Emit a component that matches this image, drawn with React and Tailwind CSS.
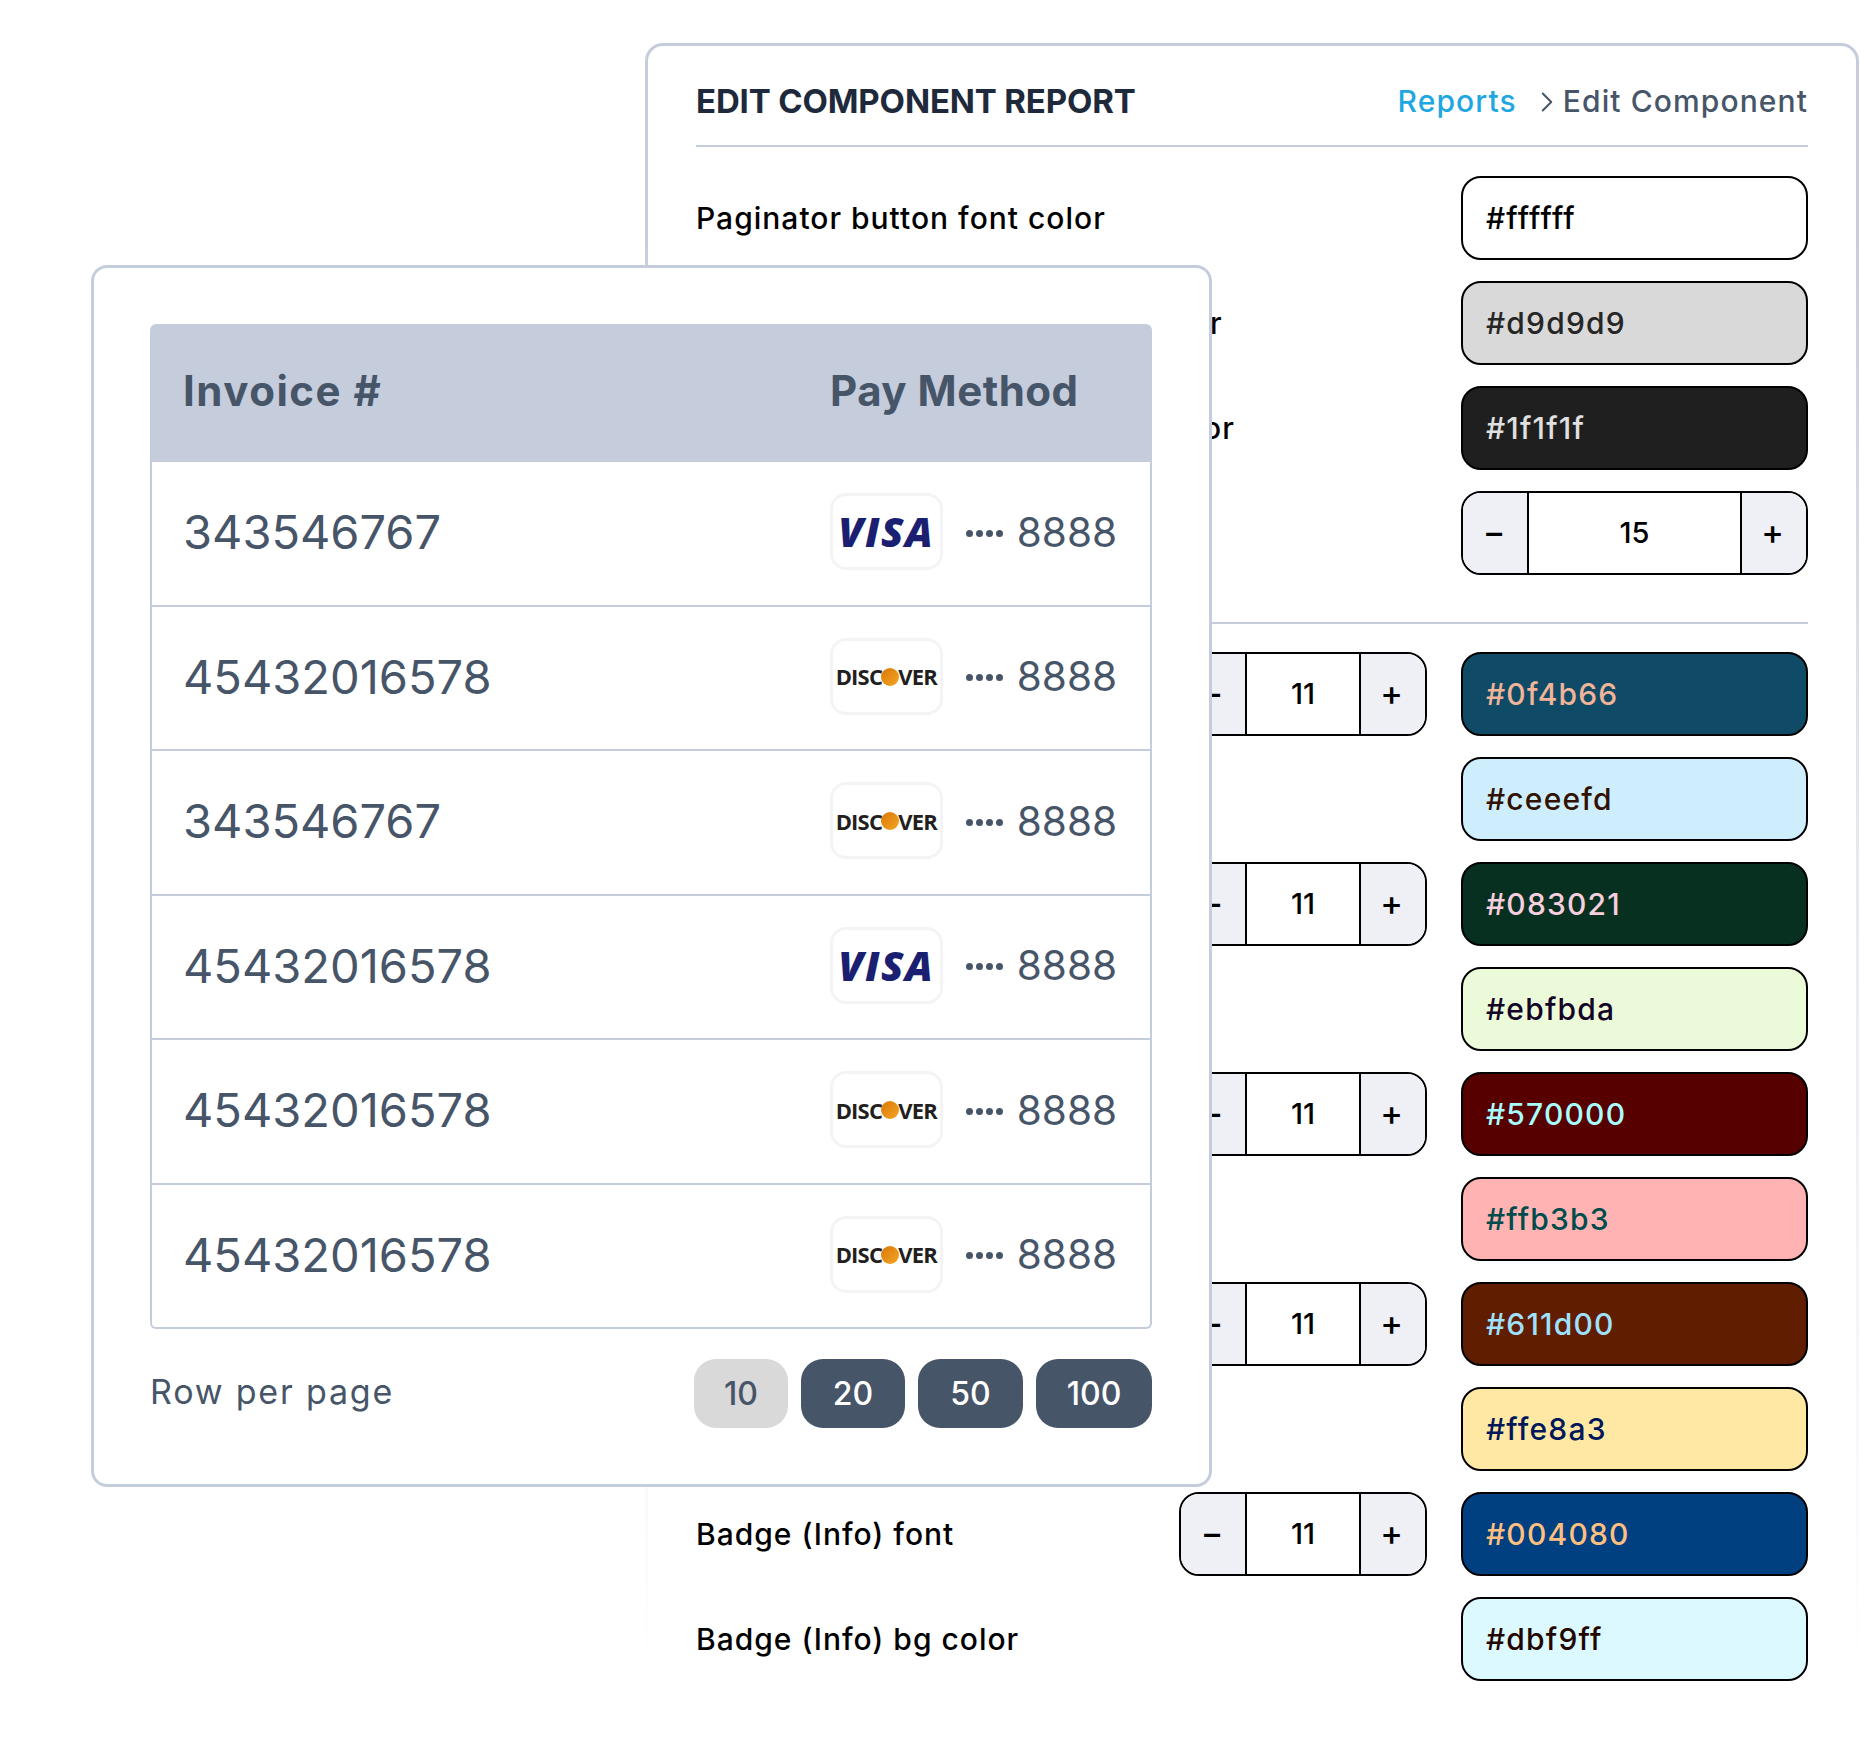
import { ChevronRight } from "lucide-react";

const rows = [
  { label: "Paginator button font color", field: "#ffffff", bg: "bg-[#ffffff]", text: "text-[#000000]" },
  { label: "Paginator button disabled bg color", field: "#d9d9d9", bg: "bg-[#d9d9d9]", text: "text-[#262626]" },
  { label: "Paginator button inactive font color", field: "#1f1f1f", bg: "bg-[#1f1f1f]", text: "text-[#e0e0e0]" },
  { stepper: "15", wide: true },
];

/* labels of these rows sit behind the invoice card */
const badgeRows = [
  { stepper: "11", field: "#0f4b66", bg: "bg-[#0f4b66]", text: "text-[#f0b499]" },
  { field: "#ceeefd", bg: "bg-[#ceeefd]", text: "text-[#311102]" },
  { stepper: "11", field: "#083021", bg: "bg-[#083021]", text: "text-[#f7cfde]" },
  { field: "#ebfbda", bg: "bg-[#ebfbda]", text: "text-[#140425]" },
  { stepper: "11", field: "#570000", bg: "bg-[#570000]", text: "text-[#a8ffff]" },
  { field: "#ffb3b3", bg: "bg-[#ffb3b3]", text: "text-[#004c4c]" },
  { stepper: "11", field: "#611d00", bg: "bg-[#611d00]", text: "text-[#9ee2ff]" },
  { field: "#ffe8a3", bg: "bg-[#ffe8a3]", text: "text-[#00175c]" },
  { label: "Badge (Info) font", stepper: "11", field: "#004080", bg: "bg-[#004080]", text: "text-[#ffbf7f]" },
  { label: "Badge (Info) bg color", field: "#dbf9ff", bg: "bg-[#dbf9ff]", text: "text-[#240600]" },
];

const invoices = [
  { id: "343546767", card: "visa" },
  { id: "45432016578", card: "discover" },
  { id: "343546767", card: "discover" },
  { id: "45432016578", card: "visa" },
  { id: "45432016578", card: "discover" },
  { id: "45432016578", card: "discover" },
];

const Stepper = ({ value, wide }) => (
  <div
    className={`flex h-[84px] overflow-hidden rounded-[20px] border-2 border-black text-[29px] font-medium text-black ${
      wide ? "w-[347px]" : "w-[248px]"
    }`}
  >
    <div className="flex w-[66px] items-center justify-center border-r-2 border-black bg-[#eff0f6] pb-[3px] pr-[2px] text-[34px]">−</div>
    <div className="flex flex-1 items-center justify-center bg-white">{value}</div>
    <div className="flex w-[66px] items-center justify-center border-l-2 border-black bg-[#eff0f6] pb-[3px] pr-[3px] text-[34px]">+</div>
  </div>
);

const SettingRow = ({ row }) => (
  <div className="flex h-[84px] items-center">
    <div className="flex-1 whitespace-nowrap text-[30px] font-medium tracking-[1px] text-black">{row.label}</div>
    {row.wide ? (
      <Stepper value={row.stepper} wide />
    ) : (
      <>
        {row.stepper && (
          <div className="mr-[34px]">
            <Stepper value={row.stepper} />
          </div>
        )}
        <div
          className={`flex h-[84px] w-[347px] items-center rounded-[20px] border-2 border-black pl-[23px] text-[30px] font-medium tracking-[1.2px] ${row.bg} ${row.text}`}
        >
          {row.field}
        </div>
      </>
    )}
  </div>
);

const CardLogo = ({ card }) => (
  <div className="mb-[3px] flex h-[77px] w-[113px] items-center justify-center rounded-[16px] border-[3px] border-[#f3f4f6] bg-white">
    {card === "visa" ? (
      <span className="font-['Open_Sans',sans-serif] text-[41px] font-extrabold italic leading-none tracking-[1.5px] text-[#1a1f71]">
        VISA
      </span>
    ) : (
      <span className="flex items-center font-['Open_Sans',sans-serif] text-[22px] font-bold leading-none tracking-[-0.8px] text-[#231f20]">
        DISC
        <span className="mx-[-1px] mt-[1px] h-[18px] w-[18px] rounded-full bg-gradient-to-br from-[#d97706] to-[#f5a623]" />
        VER
      </span>
    )}
  </div>
);

export default function App() {
  return (
    <div className="relative h-[1755px] w-[1860px] overflow-hidden bg-white font-['Inter',sans-serif]">
      {/* EDIT COMPONENT CARD, border fades out towards the bottom */}
      <div className="ml-[645px] mr-[1px] mt-[43px] h-[1640px] rounded-[18px] bg-gradient-to-b from-[#c5ccdc] from-10% via-[#e6e9f0] via-50% to-white p-[3px]">
        <div className="h-full rounded-[15px] bg-white px-[48px]">
          <div className="flex h-[101px] items-center justify-between border-b-2 border-[#c5ccdc] pt-[12px]">
            <h1 className="text-[33px] font-bold tracking-[-0.15px] text-[#1e293b]">EDIT COMPONENT REPORT</h1>
            <div className="flex items-center text-[30px] font-medium tracking-[1.1px]">
              <span className="text-[#1ea7e1]">Reports</span>
              <ChevronRight size={34} strokeWidth={1.4} className="ml-[13px] mr-[-1px] text-[#475569]" />
              <span className="text-[#475569]">Edit Component</span>
            </div>
          </div>

          <div className="flex flex-col gap-[21px] pt-[29px]">
            {rows.map((row, i) => (
              <SettingRow key={i} row={row} />
            ))}
          </div>

          <div className="mt-[47px] border-t-2 border-[#c5ccdc]" />

          <div className="flex flex-col gap-[21px] pt-[28px]">
            {badgeRows.map((row, i) => (
              <SettingRow key={i} row={row} />
            ))}
          </div>
        </div>
      </div>

      {/* INVOICE TABLE CARD, sits over the form */}
      <div className="absolute left-[91px] top-[265px] w-[1121px] rounded-[16px] border-[3px] border-[#c5ccdc] bg-white p-[56px] pr-[57px]">
        <div className="flex h-[138px] items-center rounded-t-[6px] bg-[#c5ccdc] pb-[5px] pl-[33px] text-[42px] font-bold text-[#475569]">
          <div className="flex-1 tracking-[1.5px]">Invoice #</div>
          <div className="w-[322px] tracking-[0.5px]">Pay Method</div>
        </div>

        <div className="flex h-[867px] flex-col rounded-b-[6px] border-2 border-t-0 border-[#c5ccdc]">
          {invoices.map((invoice, i) => (
            <div
              key={i}
              className="flex flex-1 items-center border-b-2 border-[#c5ccdc] pl-[31px] pr-[33px] text-[#475569] last:border-b-0"
            >
              <div className="flex-1 pb-[2px] text-[47px] font-normal">{invoice.id}</div>
              <CardLogo card={invoice.card} />
              <div className="ml-[23px] flex gap-[3px]">
                <span className="h-[7px] w-[7px] rounded-full bg-[#475569]" />
                <span className="h-[7px] w-[7px] rounded-full bg-[#475569]" />
                <span className="h-[7px] w-[7px] rounded-full bg-[#475569]" />
                <span className="h-[7px] w-[7px] rounded-full bg-[#475569]" />
              </div>
              <div className="ml-[14px] text-[40.5px] font-normal">8888</div>
            </div>
          ))}
        </div>

        <div className="mt-[30px] flex items-center justify-between">
          <div className="pb-[5px] text-[34px] tracking-[1.8px] text-[#475569]">Row per page</div>
          <div className="flex gap-[13px] text-[32px] font-medium">
            <div className="flex h-[69px] w-[94px] items-center justify-center rounded-[22px] bg-[#d9d9d9] text-[#475569]">10</div>
            <div className="flex h-[69px] w-[104px] items-center justify-center rounded-[22px] bg-[#475569] text-white">20</div>
            <div className="flex h-[69px] w-[105px] items-center justify-center rounded-[22px] bg-[#475569] text-white">50</div>
            <div className="flex h-[69px] w-[116px] items-center justify-center rounded-[22px] bg-[#475569] text-white">100</div>
          </div>
        </div>
      </div>
    </div>
  );
}
